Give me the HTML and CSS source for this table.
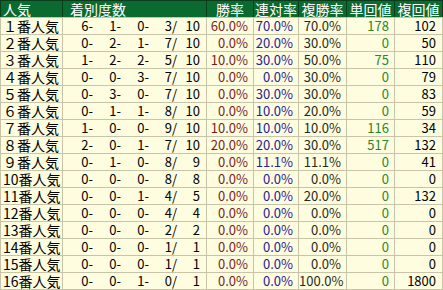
FILE: index.html
```html
<!DOCTYPE html>
<html lang="ja">
<head>
<meta charset="utf-8">
<link rel="stylesheet" href="styles.css">
</head>
<body>
<div class="tbl">
  <div class="row head">
    <div class="c c1">人気</div>
    <div class="c c2h">着別度数</div>
    <div class="c ch">勝率</div>
    <div class="c ch">連対率</div>
    <div class="c ch">複勝率</div>
    <div class="c ch">単回値</div>
    <div class="c ch">複回値</div>
  </div>
  <div class="row"><div class="c c1">１番人気</div><div class="c c2"><span>6-</span><span>1-</span><span>0-</span><span>3/</span><span class="t">10</span></div><div class="c n win">60.0%</div><div class="c n ren">70.0%</div><div class="c n fuku">70.0%</div><div class="c n tan">178</div><div class="c n fk">102</div></div>
  <div class="row"><div class="c c1">２番人気</div><div class="c c2"><span>0-</span><span>2-</span><span>1-</span><span>7/</span><span class="t">10</span></div><div class="c n win">0.0%</div><div class="c n ren">20.0%</div><div class="c n fuku">30.0%</div><div class="c n tan">0</div><div class="c n fk">50</div></div>
  <div class="row"><div class="c c1">３番人気</div><div class="c c2"><span>1-</span><span>2-</span><span>2-</span><span>5/</span><span class="t">10</span></div><div class="c n win">10.0%</div><div class="c n ren">30.0%</div><div class="c n fuku">50.0%</div><div class="c n tan">75</div><div class="c n fk">110</div></div>
  <div class="row"><div class="c c1">４番人気</div><div class="c c2"><span>0-</span><span>0-</span><span>3-</span><span>7/</span><span class="t">10</span></div><div class="c n win">0.0%</div><div class="c n ren">0.0%</div><div class="c n fuku">30.0%</div><div class="c n tan">0</div><div class="c n fk">79</div></div>
  <div class="row"><div class="c c1">５番人気</div><div class="c c2"><span>0-</span><span>3-</span><span>0-</span><span>7/</span><span class="t">10</span></div><div class="c n win">0.0%</div><div class="c n ren">30.0%</div><div class="c n fuku">30.0%</div><div class="c n tan">0</div><div class="c n fk">83</div></div>
  <div class="row"><div class="c c1">６番人気</div><div class="c c2"><span>0-</span><span>1-</span><span>1-</span><span>8/</span><span class="t">10</span></div><div class="c n win">0.0%</div><div class="c n ren">10.0%</div><div class="c n fuku">20.0%</div><div class="c n tan">0</div><div class="c n fk">59</div></div>
  <div class="row"><div class="c c1">７番人気</div><div class="c c2"><span>1-</span><span>0-</span><span>0-</span><span>9/</span><span class="t">10</span></div><div class="c n win">10.0%</div><div class="c n ren">10.0%</div><div class="c n fuku">10.0%</div><div class="c n tan">116</div><div class="c n fk">34</div></div>
  <div class="row"><div class="c c1">８番人気</div><div class="c c2"><span>2-</span><span>0-</span><span>1-</span><span>7/</span><span class="t">10</span></div><div class="c n win">20.0%</div><div class="c n ren">20.0%</div><div class="c n fuku">30.0%</div><div class="c n tan">517</div><div class="c n fk">132</div></div>
  <div class="row"><div class="c c1">９番人気</div><div class="c c2"><span>0-</span><span>1-</span><span>0-</span><span>8/</span><span class="t">9</span></div><div class="c n win">0.0%</div><div class="c n ren">11.1%</div><div class="c n fuku">11.1%</div><div class="c n tan">0</div><div class="c n fk">41</div></div>
  <div class="row"><div class="c c1">10番人気</div><div class="c c2"><span>0-</span><span>0-</span><span>0-</span><span>8/</span><span class="t">8</span></div><div class="c n win">0.0%</div><div class="c n ren">0.0%</div><div class="c n fuku">0.0%</div><div class="c n tan">0</div><div class="c n fk">0</div></div>
  <div class="row"><div class="c c1">11番人気</div><div class="c c2"><span>0-</span><span>0-</span><span>1-</span><span>4/</span><span class="t">5</span></div><div class="c n win">0.0%</div><div class="c n ren">0.0%</div><div class="c n fuku">20.0%</div><div class="c n tan">0</div><div class="c n fk">132</div></div>
  <div class="row"><div class="c c1">12番人気</div><div class="c c2"><span>0-</span><span>0-</span><span>0-</span><span>4/</span><span class="t">4</span></div><div class="c n win">0.0%</div><div class="c n ren">0.0%</div><div class="c n fuku">0.0%</div><div class="c n tan">0</div><div class="c n fk">0</div></div>
  <div class="row"><div class="c c1">13番人気</div><div class="c c2"><span>0-</span><span>0-</span><span>0-</span><span>2/</span><span class="t">2</span></div><div class="c n win">0.0%</div><div class="c n ren">0.0%</div><div class="c n fuku">0.0%</div><div class="c n tan">0</div><div class="c n fk">0</div></div>
  <div class="row"><div class="c c1">14番人気</div><div class="c c2"><span>0-</span><span>0-</span><span>0-</span><span>1/</span><span class="t">1</span></div><div class="c n win">0.0%</div><div class="c n ren">0.0%</div><div class="c n fuku">0.0%</div><div class="c n tan">0</div><div class="c n fk">0</div></div>
  <div class="row"><div class="c c1">15番人気</div><div class="c c2"><span>0-</span><span>0-</span><span>0-</span><span>1/</span><span class="t">1</span></div><div class="c n win">0.0%</div><div class="c n ren">0.0%</div><div class="c n fuku">0.0%</div><div class="c n tan">0</div><div class="c n fk">0</div></div>
  <div class="row"><div class="c c1">16番人気</div><div class="c c2"><span>0-</span><span>0-</span><span>1-</span><span>0/</span><span class="t">1</span></div><div class="c n win">0.0%</div><div class="c n ren">0.0%</div><div class="c n fuku">100.0%</div><div class="c n tan">0</div><div class="c n fk">1800</div></div>
</div>
</body>
</html>
```

FILE: styles.css
```css
html, body {
  margin: 0;
  padding: 0;
  background: #ffffff;
}
.tbl {
  width: 443px;
  height: 290px;
  display: grid;
  grid-template-rows: repeat(17, 16px);
  row-gap: 1px;
  padding: 1px 0;
  box-sizing: border-box;
  background: #c8c4a8;
  font-family: "Noto Sans CJK JP", sans-serif;
  font-size: 13px;
  font-weight: 400;
  color: #000;
}
.row {
  display: grid;
  grid-template-columns: 61px 143px 46px 44px 47px 47px 47px;
  column-gap: 1px;
  padding: 0 1px;
}
.row.head {
  background: #0b3d1a;
  margin-top: -1px;
  padding-top: 1px;
  height: 16px;
}
.c {
  background: #fffde0;
  height: 16px;
  line-height: 16px;
  white-space: nowrap;
}
.head .c {
  background: #0a6a30;
  color: #ffffff;
  font-size: 14px;
}
.c1 {
  padding-left: 2px;
  font-size: 14px;
}
.c2h {
  padding-left: 7px;
}
.ch {
  text-align: center;
}
.c2 {
  display: flex;
  justify-content: flex-end;
  padding-right: 6px;
}
.c2 span {
  display: inline-block;
  width: 28px;
  text-align: right;
}
.c2 span.t {
  width: 23px;
}
.n {
  text-align: right;
  padding-right: 5px;
}
.win { color: #7a1c1c; }
.ren { color: #22229a; }
.fuku { color: #1e2a1e; }
.tan { color: #2a862a; }
.fk { color: #000000; padding-right: 6px; }
```
